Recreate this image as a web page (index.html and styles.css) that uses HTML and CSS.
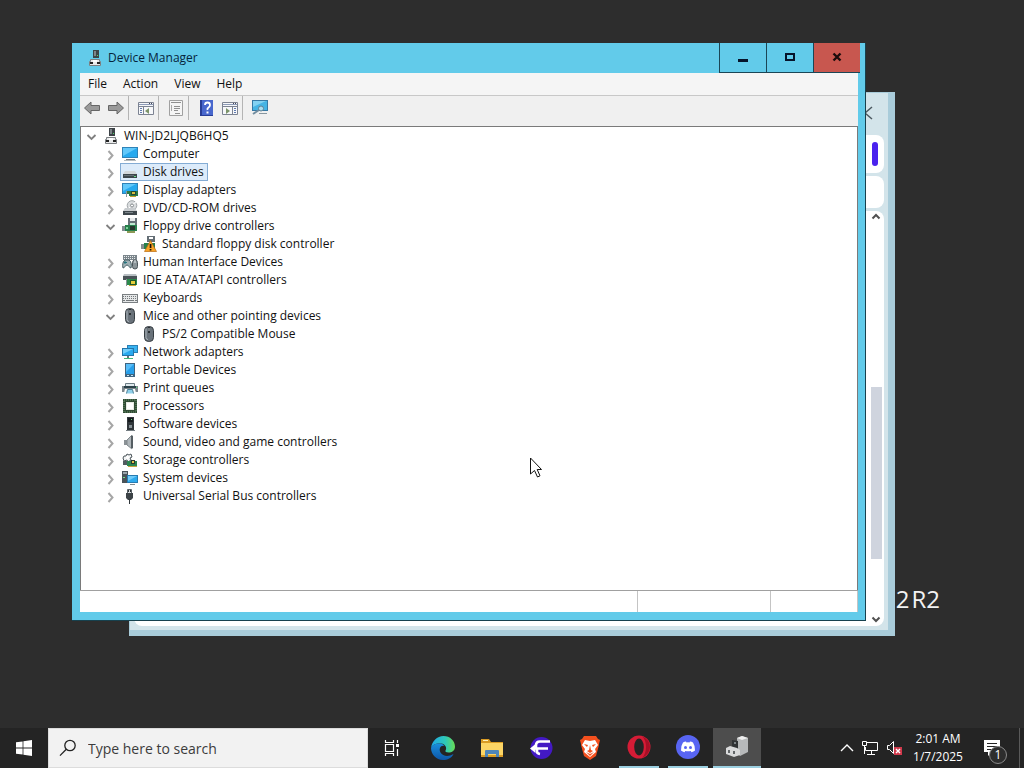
FILE: index.html
```html
<!DOCTYPE html>
<html lang="en">
<head>
    <meta charset="UTF-8">
    <meta name="viewport" content="width=device-width, initial-scale=1.0">
    <title>Device Manager</title>
    <link rel="stylesheet" href="styles.css">
</head>
<body>
    <!-- Icon set -->
    <svg class="sprite" aria-hidden="true">
        <symbol id="i-right" viewBox="0 0 16 16"><path d="M6.500 5l4 4.500-4 4.500" fill="none" stroke="#a6a6a6" stroke-width="2"/></symbol>
        <symbol id="i-down" viewBox="0 0 16 16"><path d="M4.500 7l4 4 4-4" fill="none" stroke="#808080" stroke-width="1.800"/></symbol>
        <symbol id="i-host" viewBox="0 0 16 16">
            <path d="M6 0h6v8H6z" fill="#3d4347"/><path d="M7 1h2v5H7z" fill="#7d8589"/><path d="M10 5h1v1h-1z" fill="#4be06a"/>
            <path d="M3.500 9.500h9v2h1v4h-11v-4h1z" fill="#e8e9ea" stroke="#7b7f82"/><path d="M3 12h3v2H3zM10 12h3v2h-3z" fill="#222"/><path d="M6 10h4v2H6z" fill="#fff"/>
        </symbol>
        <symbol id="i-monitor" viewBox="0 0 16 16">
            <path d="M0 1h16v11H0z" fill="#2f83b8"/><path d="M1 2h14v9H1z" fill="#27a9ee"/><path d="M1 2h14L1 10z" fill="#62c8fa"/><path d="M4 13h9v1H4z" fill="#777e84"/><path d="M2 14h12v1H2z" fill="#b4bbc0"/>
        </symbol>
        <symbol id="i-disk" viewBox="0 0 16 16">
            <path d="M3 7h10l2 3H1z" fill="#d3d7da"/><path d="M1 10h14v4H1z" fill="#3e474c"/><path d="M2 11h10v1H2z" fill="#667178"/><path d="M12 12h2v1h-2z" fill="#6be08a"/>
        </symbol>
        <symbol id="i-display" viewBox="0 0 16 16">
            <path d="M0 1h16v11H0z" fill="#2f83b8"/><path d="M1 2h14v9H1z" fill="#27a9ee"/><path d="M1 2h13L1 9z" fill="#62c8fa"/>
            <path d="M5 9h11v5H7v-2H5z" fill="#2c7a45"/><path d="M9 9h5v4H9z" fill="#244c35"/><path d="M10 10h3v2h-3z" fill="#d8bd3e"/><path d="M8 14h6v1H8z" fill="#c49d28"/><path d="M4 9h1v6H4z" fill="#8d9699"/>
        </symbol>
        <symbol id="i-dvd" viewBox="0 0 16 16">
            <circle cx="10" cy="5.500" r="4.800" fill="#d9dcde" stroke="#a1a6a9"/><path d="M10 5l4-3M10 5l-4 4" stroke="#fff"/><circle cx="10" cy="5.500" r="1.500" fill="#fff" stroke="#84898c"/>
            <path d="M3 8h10l2 3H1z" fill="#c8cccf"/><path d="M1 11h14v4H1z" fill="#3e474c"/><path d="M3 12h8v1H3z" fill="#7b858a"/>
        </symbol>
        <symbol id="i-floppy" viewBox="0 0 16 16">
            <path d="M6 0h9v8H6z" fill="#667077"/><path d="M8 0h5v3H8z" fill="#e8ebed"/><path d="M8 5h5v3H8z" fill="#bfe8d1"/>
            <path d="M3 7h12v6H3z" fill="#26804c"/><path d="M0 8h3v5H0z" fill="#858e92"/><path d="M8 8h5v4H8z" fill="#28372e"/><path d="M5 13h8v2H5z" fill="#8d9a58"/><path d="M4 9h2v2H4z" fill="#7bd39a"/>
        </symbol>
        <symbol id="i-floppy-warn" viewBox="0 0 16 16">
            <path d="M6 0h8v6H6z" fill="#646e75"/><path d="M8 1h4v2H8z" fill="#fff"/><path d="M3 7h11v6H3z" fill="#26804c"/><path d="M0 8h3v5H0z" fill="#858e92"/>
            <path d="M9.500 4.500L15.500 15.500H3.500z" fill="#f8a427" stroke="#b96a10" stroke-width=".7"/><path d="M8.700 8h1.700v4H8.700zM8.700 13h1.700v1.500H8.700z" fill="#201208"/>
        </symbol>
        <symbol id="i-hid" viewBox="0 0 16 16">
            <path d="M1 1h14v5H1z" fill="#7b858b"/><path d="M2 2.500h12M2 4.500h12" stroke="#e7ebec" stroke-dasharray="1 1"/>
            <path d="M1 14c-1-3 0-7 2-8h4c2 1 3 5 2 8-2 0-2-3-4-3s-2 3-4 3z" fill="#9fb1b5" stroke="#4b6167"/><path d="M3 7v3M2 8.500h3" stroke="#25727c"/><rect x="10.500" y="6" width="5" height="9" rx="2.500" fill="#8b9599" stroke="#4c565a"/><path d="M13 6v3" stroke="#e2e7e9"/>
        </symbol>
        <symbol id="i-ide" viewBox="0 0 16 16">
            <path d="M2 2h12l1 2H1z" fill="#b9c0c4"/><path d="M1 4h14v4H1z" fill="#4a5358"/><path d="M5 7h10v6H5z" fill="#2b8a4c"/><path d="M8 8h6v5H8z" fill="#20582a"/><path d="M9 9h4v3H9z" fill="#e5cf3c"/><path d="M7 13h7v1H7z" fill="#cda634"/><path d="M4 7h1v7H4z" fill="#899296"/>
        </symbol>
        <symbol id="i-keyboard" viewBox="0 0 16 16">
            <path d="M0 4h16v9H0z" fill="#7b8083"/><path d="M1 5h14v7H1z" fill="#e5e7e8"/><path d="M1 6.500h14M1 8.500h14" stroke="#74797c" stroke-dasharray="1 1"/><path d="M1 10.500h2M4 10.500h8M13 10.500h2" stroke="#74797c"/>
        </symbol>
        <symbol id="i-mouse" viewBox="0 0 16 16">
            <rect x="3.500" y=".5" width="9" height="15" rx="4" fill="#69727a" stroke="#363d42"/><path d="M5 2.500v9q0 2 2 2" fill="none" stroke="#aeb6bc"/><path d="M8 1v6" stroke="#2b3135" stroke-width="2"/><path d="M8 2v3" stroke="#c4cbd0"/>
        </symbol>
        <symbol id="i-network" viewBox="0 0 16 16">
            <path d="M5 1h11v8H5z" fill="#2b7fb4"/><path d="M6 2h9v6H6z" fill="#38b3f1"/><path d="M0 4h12v8H0z" fill="#2475a9"/><path d="M1 5h10v6H1z" fill="#29aaf0"/><path d="M1 5h10l-10 5z" fill="#71cefb"/><path d="M5 12h2v2H5z" fill="#6a7378"/><path d="M2 14h9v1H2z" fill="#41b77a"/>
        </symbol>
        <symbol id="i-portable" viewBox="0 0 16 16">
            <path d="M3 1h10v14H3z" fill="#3e6480"/><path d="M4 2h8v10H4z" fill="#279fea"/><path d="M4 2h8l-8 8z" fill="#58bdf8"/><path d="M5 13h2v1H5zM9 13h2v1H9z" fill="#c4e5f7"/>
        </symbol>
        <symbol id="i-printer" viewBox="0 0 16 16">
            <path d="M3.500 3.500h9v3h-9z" fill="#dfe9ed" stroke="#6d7d85"/><path d="M0 6h16v6H0z" fill="#7d878c"/><path d="M2 6h12v2H2z" fill="#2b4149"/><path d="M14 7h1v1h-1z" fill="#62e58a"/><path d="M3 9h10l1 4H2z" fill="#fff"/><path d="M4.500 13.500l1-4h5l1 4" fill="#8fd0ea" stroke="#4b7f95"/>
        </symbol>
        <symbol id="i-cpu" viewBox="0 0 16 16">
            <path d="M1 1h14v14H1z" fill="#304b34"/><path d="M2 2h12v12H2z" fill="none" stroke="#6a936d" stroke-dasharray="1 1"/><path d="M4 4h8v8H4z" fill="#e8ece4"/><path d="M5 5h6v6H5z" fill="#fff"/>
        </symbol>
        <symbol id="i-software" viewBox="0 0 16 16">
            <path d="M5 1h7v13H5z" fill="#30363a"/><path d="M6 2h5v4H6z" fill="#151a1d"/><path d="M7 9h3v3H7z" fill="#869095"/><path d="M9 3h1v1H9z" fill="#63d67e"/><path d="M4 14h9v1H4z" fill="#737c81"/>
        </symbol>
        <symbol id="i-sound" viewBox="0 0 16 16">
            <path d="M2 6h3v5H2z" fill="#8b9296"/><path d="M5 6l5-5v14l-5-4z" fill="#b0b7bb" stroke="#81898d"/><path d="M9 2h2v12H9z" fill="#555e63"/>
        </symbol>
        <symbol id="i-storage" viewBox="0 0 16 16">
            <path d="M2 4h2l1-2 2 1 2-1 1 3-2 1 1 2-3 2-1-2-3 1-1-3z" fill="#f0f2f3" stroke="#4d565b"/><circle cx="5.500" cy="5.500" r="1.500" fill="#fff"/>
            <path d="M1 9h7v4H1z" fill="#525c61"/><path d="M5 9h10v5H5z" fill="#2c8550"/><path d="M9 8h4v4H9z" fill="#2b392f"/><path d="M10 9h2v2h-2z" fill="#e1c247"/><path d="M6 14h9v1H6z" fill="#c8a53c"/>
        </symbol>
        <symbol id="i-system" viewBox="0 0 16 16">
            <path d="M0 1h6v12H0z" fill="#495359"/><path d="M1 2h4v2H1z" fill="#9ba6ac"/><path d="M1 7h2v1H1z" fill="#74df87"/><path d="M5 5h11v8H5z" fill="#277bb1"/><path d="M6 6h9v6H6z" fill="#2eabee"/><path d="M6 6h9l-9 5z" fill="#6fcbf9"/><path d="M8 14h5v1H8z" fill="#818a8e"/>
        </symbol>
        <symbol id="i-usb" viewBox="0 0 16 16">
            <path d="M5.500 1.500h4v4h-4z" fill="#d6dadc" stroke="#5c6469"/><path d="M6 2h1v2H6zM8 2h1v2H8z" fill="#30363a"/><path d="M4 5h7v5l-2 2H6l-2-2z" fill="#3c4347"/><path d="M7 11h1v5H7z" fill="#30363a"/>
        </symbol>
    </svg>

    <main class="desktop">
        <div class="watermark"><span>2</span> <span>R2</span></div>

        <!-- Browser window behind -->
        <section class="browser" aria-label="Browser">
            <div class="browser-top">
                <svg viewBox="0 0 12 14" width="12" height="14"><path d="M10 1L3 7l7 6" fill="none" stroke="#4c5960" stroke-width="1.500"/></svg>
            </div>
            <div class="browser-bar"><span class="accent"></span></div>
            <div class="browser-card"></div>
            <div class="browser-page">
                <div class="scrollbar">
                    <svg viewBox="0 0 12 12"><path d="M2.500 7.500L6 4l3.500 3.500" fill="none" stroke="#505050" stroke-width="2"/></svg>
                    <div class="track"><span class="thumb"></span></div>
                    <svg viewBox="0 0 12 12"><path d="M2.500 3.500L6 7l3.500-3.500" fill="none" stroke="#505050" stroke-width="2"/></svg>
                </div>
            </div>
        </section>

        <section class="window" aria-label="Device Manager">
            <header class="titlebar">
                <svg class="icon"><use href="#i-host"/></svg>
                <h1>Device Manager</h1>
                <div class="caption">
                    <button aria-label="Minimize"><svg viewBox="0 0 12 12"><path d="M1 7h10v3H1z" fill="#06142a"/></svg></button>
                    <button aria-label="Maximize"><svg viewBox="0 0 12 12"><path d="M2 2h8v6H2z" fill="none" stroke="#06142a" stroke-width="2"/></svg></button>
                    <button class="close" aria-label="Close"><svg viewBox="0 0 12 12"><path d="M2.500 1.500l7 7M9.500 1.500l-7 7" stroke="#1c0c0c" stroke-width="2.400"/></svg></button>
                </div>
            </header>

            <nav class="menu">
                <button>File</button>
                <button>Action</button>
                <button>View</button>
                <button>Help</button>
            </nav>

            <div class="toolbar">
                <div class="tools">
                    <button aria-label="Back"><svg viewBox="0 0 18 18"><path d="M1.500 9L8 3v3.500h8.500v5H8V15z" fill="#9a9a9a" stroke="#666"/></svg></button>
                    <button aria-label="Forward"><svg viewBox="0 0 18 18"><path d="M16.500 9L10 3v3.500H1.500v5H10V15z" fill="#9a9a9a" stroke="#666"/></svg></button>
                </div>
                <div class="tools">
                    <button aria-label="Show console tree"><svg viewBox="0 0 18 18"><path d="M1.500 3.500h15v12h-15z" fill="#f7f8fa" stroke="#7c8392"/><path d="M2 5.500h14" stroke="#8d9bb8"/><path d="M12 4h1v1h-1zM14 4h1v1h-1z" fill="#445"/><path d="M2 7.500h14M6.500 8v7" stroke="#7c8392"/><path d="M3 9.500h2M3 11.500h2M3 13.500h2" stroke="#607bb1"/><path d="M12 9v6l-4-3z" fill="#7c946a"/></svg></button>
                </div>
                <div class="tools">
                    <button aria-label="Properties"><svg viewBox="0 0 18 18"><path d="M2.500 1.500h13v15h-13z" fill="#f5f5f5" stroke="#a0a0a0"/><path d="M4 3.500h10M7 7.500h6M7 9.500h6M7 11.500h4M8 14.500h5" stroke="#909090"/><path d="M4.500 6v6" stroke="#aaa"/></svg></button>
                </div>
                <div class="tools">
                    <button aria-label="Help"><svg viewBox="0 0 18 18"><path d="M3 1h13v16H3z" fill="#283d96"/><path d="M5 1h11v15H5z" fill="#4867cd"/><path d="M8 6q0-2.500 2.500-2.500T13 6q0 1.500-1.500 2.500T10.500 11" fill="none" stroke="#fff" stroke-width="1.800"/><path d="M9.500 12.500h2v2h-2z" fill="#fff"/></svg></button>
                    <button aria-label="Show action pane"><svg viewBox="0 0 18 18"><path d="M1.500 3.500h15v12h-15z" fill="#f7f8fa" stroke="#7c8392"/><path d="M2 5.500h14" stroke="#8d9bb8"/><path d="M12 4h1v1h-1zM14 4h1v1h-1z" fill="#445"/><path d="M2 7.500h14M11.500 8v7" stroke="#7c8392"/><path d="M13 9.500h2M13 11.500h2M13 13.500h2" stroke="#607bb1"/><path d="M5 9l4 3-4 3z" fill="#7c946a"/></svg></button>
                </div>
                <div class="tools">
                    <button aria-label="Scan for hardware changes"><svg viewBox="0 0 18 18"><path d="M1 1h16v11H1z" fill="#3679a5"/><path d="M2 2h14v9H2z" fill="#45b4e4"/><path d="M2 2h13L2 8z" fill="#83d2f2"/><path d="M2 15l6-4" stroke="#738ea0" stroke-width="2"/><circle cx="10" cy="9.500" r="2.500" fill="#a9def1" stroke="#5f8195"/><path d="M8 14h8v1H8z" fill="#8796a0"/></svg></button>
                </div>
            </div>

            <ul class="tree">
                <li>
                    <div class="row"><button aria-label="Collapse"><svg class="icon"><use href="#i-down"/></svg></button><span class="item"><svg class="icon"><use href="#i-host"/></svg>WIN-JD2LJQB6HQ5</span></div>
                    <ul>
                        <li><div class="row"><button aria-label="Expand"><svg class="icon"><use href="#i-right"/></svg></button><span class="item"><svg class="icon"><use href="#i-monitor"/></svg>Computer</span></div></li>
                        <li><div class="row"><button aria-label="Expand"><svg class="icon"><use href="#i-right"/></svg></button><span class="item selected"><svg class="icon"><use href="#i-disk"/></svg>Disk drives</span></div></li>
                        <li><div class="row"><button aria-label="Expand"><svg class="icon"><use href="#i-right"/></svg></button><span class="item"><svg class="icon"><use href="#i-display"/></svg>Display adapters</span></div></li>
                        <li><div class="row"><button aria-label="Expand"><svg class="icon"><use href="#i-right"/></svg></button><span class="item"><svg class="icon"><use href="#i-dvd"/></svg>DVD/CD-ROM drives</span></div></li>
                        <li>
                            <div class="row"><button aria-label="Collapse"><svg class="icon"><use href="#i-down"/></svg></button><span class="item"><svg class="icon"><use href="#i-floppy"/></svg>Floppy drive controllers</span></div>
                            <ul>
                                <li><div class="row leaf"><span class="item"><svg class="icon"><use href="#i-floppy-warn"/></svg>Standard floppy disk controller</span></div></li>
                            </ul>
                        </li>
                        <li><div class="row"><button aria-label="Expand"><svg class="icon"><use href="#i-right"/></svg></button><span class="item"><svg class="icon"><use href="#i-hid"/></svg>Human Interface Devices</span></div></li>
                        <li><div class="row"><button aria-label="Expand"><svg class="icon"><use href="#i-right"/></svg></button><span class="item"><svg class="icon"><use href="#i-ide"/></svg>IDE ATA/ATAPI controllers</span></div></li>
                        <li><div class="row"><button aria-label="Expand"><svg class="icon"><use href="#i-right"/></svg></button><span class="item"><svg class="icon"><use href="#i-keyboard"/></svg>Keyboards</span></div></li>
                        <li>
                            <div class="row"><button aria-label="Collapse"><svg class="icon"><use href="#i-down"/></svg></button><span class="item"><svg class="icon"><use href="#i-mouse"/></svg>Mice and other pointing devices</span></div>
                            <ul>
                                <li><div class="row leaf"><span class="item"><svg class="icon"><use href="#i-mouse"/></svg>PS/2 Compatible Mouse</span></div></li>
                            </ul>
                        </li>
                        <li><div class="row"><button aria-label="Expand"><svg class="icon"><use href="#i-right"/></svg></button><span class="item"><svg class="icon"><use href="#i-network"/></svg>Network adapters</span></div></li>
                        <li><div class="row"><button aria-label="Expand"><svg class="icon"><use href="#i-right"/></svg></button><span class="item"><svg class="icon"><use href="#i-portable"/></svg>Portable Devices</span></div></li>
                        <li><div class="row"><button aria-label="Expand"><svg class="icon"><use href="#i-right"/></svg></button><span class="item"><svg class="icon"><use href="#i-printer"/></svg>Print queues</span></div></li>
                        <li><div class="row"><button aria-label="Expand"><svg class="icon"><use href="#i-right"/></svg></button><span class="item"><svg class="icon"><use href="#i-cpu"/></svg>Processors</span></div></li>
                        <li><div class="row"><button aria-label="Expand"><svg class="icon"><use href="#i-right"/></svg></button><span class="item"><svg class="icon"><use href="#i-software"/></svg>Software devices</span></div></li>
                        <li><div class="row"><button aria-label="Expand"><svg class="icon"><use href="#i-right"/></svg></button><span class="item"><svg class="icon"><use href="#i-sound"/></svg>Sound, video and game controllers</span></div></li>
                        <li><div class="row"><button aria-label="Expand"><svg class="icon"><use href="#i-right"/></svg></button><span class="item"><svg class="icon"><use href="#i-storage"/></svg>Storage controllers</span></div></li>
                        <li><div class="row"><button aria-label="Expand"><svg class="icon"><use href="#i-right"/></svg></button><span class="item"><svg class="icon"><use href="#i-system"/></svg>System devices</span></div></li>
                        <li><div class="row"><button aria-label="Expand"><svg class="icon"><use href="#i-right"/></svg></button><span class="item"><svg class="icon"><use href="#i-usb"/></svg>Universal Serial Bus controllers</span></div></li>
                    </ul>
                </li>
            </ul>

            <footer class="statusbar"><span></span><span></span><span></span></footer>
        </section>

        <svg class="cursor" viewBox="0 0 14 22"><path d="M1.500 1v16l4-3.500 3 6.500 2.500-1.200L8.200 12.500H12.500z" fill="#fff" stroke="#111"/></svg>
    </main>

    <footer class="taskbar">
        <button class="start" aria-label="Start"><svg viewBox="0 0 16 16" width="16" height="16"><path d="M0 2.300L6.600 1.400v6.200H0zM7.400 1.300L16 0v7.600H7.400zM0 8.400h6.600v6.200L0 13.700zM7.400 8.400H16V16l-8.600-1.300z" fill="#fff"/></svg></button>
        <label class="search">
            <svg viewBox="0 0 18 18" width="18" height="18"><circle cx="11" cy="6.500" r="5.200" fill="none" stroke="#222" stroke-width="1.300"/><path d="M7.300 10.300L1 16.600" stroke="#222" stroke-width="1.300"/></svg>
            <input type="text" placeholder="Type here to search" aria-label="Search">
        </label>
        <button class="app" aria-label="Task view"><svg viewBox="0 0 18 18" width="18" height="18"><path d="M2.500 5.500h8v7h-8zM2.500 1v2.500h8V1M2.500 17v-2.500h8V17M14.500 1v3M14.500 10v7" fill="none" stroke="#fff" stroke-width="1.200"/><path d="M13 5h3v3h-3z" fill="#fff"/></svg></button>
        <button class="app edge" aria-label="Edge"><svg viewBox="0 0 24 24" width="24" height="24">
            <defs>
                <linearGradient id="edge-a" x1="0" y1="0" x2="1" y2="0"><stop offset="0" stop-color="#1fa8e8"/><stop offset=".6" stop-color="#2ec8b8"/><stop offset="1" stop-color="#68dd55"/></linearGradient>
                <linearGradient id="edge-b" x1="0" y1="0" x2="0" y2="1"><stop offset="0" stop-color="#1a8fdc"/><stop offset="1" stop-color="#0d56a8"/></linearGradient>
            </defs>
            <path d="M0 12C1 5 6 0 12.500 0 19 0 24 5 24 10.500c0 4-3 6-6.500 6-2.500 0-3.500-1-3-2 1.500-2 .5-6.500-4.500-7C5 7 1 9 0 12z" fill="url(#edge-a)"/>
            <path d="M0 12c1-3 5-5 9-4.500 2 .2 3.500 1.200 4.500 2.500-4-1-6 3-4 6.500 2.500 4 8 4.500 13 1.500-2 4-6 6-10.500 6C5 24 0 18 0 12z" fill="url(#edge-b)"/>
        </svg></button>
        <button class="app" aria-label="File Explorer"><svg viewBox="0 0 24 24" width="24" height="24"><path d="M1 3h8l2 3h12v15H1z" fill="#d99b24"/><path d="M1 7h22v12H1z" fill="#fcd565"/><path d="M3 4h5v1H3z" fill="#fff2bb"/><path d="M5 21v-6q0-1 1-1h12q1 0 1 1v6h-3v-3H8v3z" fill="#4f86b9"/></svg></button>
        <button class="app" aria-label="Browser"><svg viewBox="0 0 24 24" width="24" height="24"><circle cx="12.500" cy="12" r="11" fill="#4319c4"/><path d="M21 5.500H11Q7 5.500 7 9.500V12M5 12.500h14M8 13v2.500q0 2 3 2.500" fill="none" stroke="#fff" stroke-width="2.600"/><path d="M1 12.500L6.500 8v9z" fill="#fff"/></svg></button>
        <button class="app" aria-label="Brave"><svg viewBox="0 0 24 24" width="24" height="24"><path d="M6 0h12l2 3 2 1-1 4 0 1-3 11-6 4-6-4L3 9V8L2 4l2-1z" fill="#f4501e"/><path d="M7 4l5 1 5-1 3 5-3 4 1 3-6 5-6-5 1-3-3-4z" fill="#fff"/><path d="M6 8l4 1-1 2zM18 8l-4 1 1 2zM12 9l1 5 2 1-3 2-3-2 2-1zM8 16l4 2 4-2-4 4z" fill="#f4501e"/></svg></button>
        <button class="app running" aria-label="Opera"><svg viewBox="0 0 24 24" width="24" height="24"><circle cx="12" cy="12" r="11.500" fill="#d51c36"/><path d="M15 1q8 4 8 11t-8 11q4-4 4-11T15 1z" fill="#a70f26"/><ellipse cx="12" cy="12" rx="4.800" ry="8.500" fill="#242424"/></svg></button>
        <button class="app running" aria-label="Discord"><svg viewBox="0 0 24 24" width="24" height="24"><circle cx="12" cy="12" r="12" fill="#5865f2"/><path d="M7 7.500Q8.500 6.600 10 6.500l.5 1q1.500-.3 3 0l.5-1q1.500.1 3 1Q19.300 11 19 15.500q-1.500 1.300-3.500 1.700l-.8-1.300q-2.700.8-5.400 0l-.8 1.300Q6.500 16.800 5 15.500 4.700 11 7 7.500z" fill="#fff"/><circle cx="9.500" cy="12.500" r="1.500" fill="#5865f2"/><circle cx="14.500" cy="12.500" r="1.500" fill="#5865f2"/></svg></button>
        <button class="app running active" aria-label="Device Manager"><svg viewBox="0 0 24 24" width="24" height="24"><path d="M12 3l5-2 6 2v14l-8 4-3-3z" fill="#b7b9ba"/><path d="M12 3l5-2 6 2-6 2z" fill="#eee"/><path d="M7 5l6 1v8l-6-1z" fill="#303335"/><path d="M9 7h2v2H9z" fill="#7c8386"/><path d="M1 13l4-2 7 2 3 2v5l-6 2-8-3z" fill="#d9dadb"/><path d="M3 15h2v3H3zM8 16h2v3H8z" fill="#626668"/></svg></button>

        <div class="tray">
            <button class="tray-icon" aria-label="Show hidden icons"><svg viewBox="0 0 14 14" width="14" height="14"><path d="M1 10l6-6 6 6" fill="none" stroke="#fff" stroke-width="1.400"/></svg></button>
            <button class="tray-icon" aria-label="Network"><svg viewBox="0 0 18 16" width="18" height="16"><path d="M6 2.500h10.500v8H4.500V7M10.500 11v3M6 14.500h8" fill="none" stroke="#fff"/><path d="M1.500 1.500h4v4h-4zM3.500 6v8" fill="none" stroke="#fff"/></svg></button>
            <button class="tray-icon" aria-label="Volume muted"><svg viewBox="0 0 18 16" width="18" height="16"><path d="M1.500 5.500h2l4-4v12l-4-4h-2z" fill="none" stroke="#fff"/><path d="M8 7h8v8H8z" fill="#d0394b"/><path d="M10 9l4 4M14 9l-4 4" stroke="#fff" stroke-width="1.400"/></svg></button>
        </div>
        <div class="clock"><span>2:01 AM</span><span>1/7/2025</span></div>
        <button class="notify" aria-label="Notifications"><svg viewBox="0 0 18 18" width="18" height="18"><path d="M1 1h16v12H9l-4 4v-4H1z" fill="#fff"/><path d="M4 4.500h10M4 7.500h10M4 10.500h6" stroke="#252525"/></svg><span class="badge">1</span></button>
        <span class="peek"></span>
    </footer>
</body>
</html>
```
FILE: styles.css
```css
* {
    margin: 0;
    padding: 0;
    box-sizing: border-box;
}

:root {
    --desktop: #2d2d2d;
    --frame: #62cbea;
    --chrome: #f0f0f0;
}

body {
    font-family: 'Open Sans', 'Noto Sans', sans-serif;
    font-size: 12px;
    color: #111;
    background: var(--desktop);
    display: flex;
    flex-direction: column;
    height: 100vh;
    overflow: hidden;
}

button {
    font: inherit;
    color: inherit;
    background: none;
    border: none;
}

svg {
    display: block;
}

ul {
    list-style: none;
}

.sprite {
    position: absolute;
    width: 0;
    height: 0;
}

.icon {
    width: 16px;
    height: 16px;
    flex: none;
}

.desktop {
    position: relative;
    flex: 1;
}

.watermark {
    position: absolute;
    right: 84px;
    bottom: 113px;
    display: flex;
    gap: 2px;
    font-size: 24px;
    line-height: 32px;
    color: #f2f2f2;
}

/* Browser window */
.browser {
    position: absolute;
    top: 92px;
    right: 129px;
    bottom: 92px;
    left: 129px;
    display: flex;
    flex-direction: column;
    gap: 3px;
    padding: 0 4px 4px;
    background: #d3e4ea;
    border: solid #a9ccda;
    border-width: 1px 7px 6px 1px;
}

.browser-top {
    display: flex;
    align-items: center;
    justify-content: flex-end;
    height: 39px;
    padding-right: 10px;
}

.browser-bar {
    display: flex;
    justify-content: flex-end;
    height: 38px;
    padding: 7px 6px;
    background: #fff;
    border-radius: 8px;
}

.accent {
    width: 6px;
    border-radius: 3px;
    background: #4a22ee;
}

.browser-card {
    height: 32px;
    background: #fff;
    border-radius: 8px;
}

.browser-page {
    flex: 1;
    display: flex;
    justify-content: flex-end;
    background: #fff;
    border-radius: 8px;
}

.scrollbar {
    width: 16px;
    display: flex;
    flex-direction: column;
    align-items: center;
}

.scrollbar svg {
    width: 12px;
    height: 12px;
}

.track {
    flex: 1;
    display: flex;
    flex-direction: column;
}

.track::before {
    content: "";
    flex: 42;
}

.track::after {
    content: "";
    flex: 14;
}

.thumb {
    flex: 44;
    width: 11px;
    background: #cfd4de;
}

/* Device Manager window */
.window {
    position: absolute;
    top: 43px;
    right: 158px;
    bottom: 107px;
    left: 72px;
    display: flex;
    flex-direction: column;
    padding: 0 7px 8px 8px;
    background: var(--frame);
    border: solid #17414e;
    border-width: 0 1px 1px 0;
}

.titlebar {
    display: flex;
    align-items: center;
    height: 30px;
    margin-right: -2px;
    padding-left: 7px;
}

.titlebar h1 {
    flex: 1;
    margin-left: 5px;
    padding-bottom: 2px;
    font-size: 12px;
    font-weight: normal;
    color: #06243c;
}

.caption {
    display: flex;
    align-self: stretch;
}

.caption button {
    display: flex;
    align-items: center;
    justify-content: center;
    width: 47px;
    border: solid #1b4656;
    border-width: 0 0 1px 1px;
}

.caption svg {
    width: 12px;
    height: 12px;
}

.caption .close {
    background: #c8574f;
}

.menu {
    display: flex;
    height: 23px;
    background: #f5f5f5;
    border-bottom: 1px solid #c8c8c8;
}

.menu button {
    padding: 0 8px 2px;
}

.toolbar {
    display: flex;
    align-items: center;
    height: 30px;
    padding-bottom: 6px;
    background: var(--chrome);
}

.tools {
    display: flex;
    gap: 6px;
    height: 24px;
    padding: 0 3px 0 8px;
    border-right: 1px solid #b4b4b4;
}

.tools:first-child {
    padding-left: 3px;
}

.tools:last-child {
    border: none;
}

.tools button {
    display: flex;
    align-items: center;
}

.tools svg {
    width: 18px;
    height: 18px;
}

.tree {
    flex: 1;
    padding-left: 2px;
    background: #fff;
    border: solid #7a7a7a;
    border-width: 1px 1px 0 1px;
    overflow: hidden;
}

.tree ul {
    padding-left: 19px;
}

.row {
    display: flex;
    align-items: center;
    height: 18px;
}

.row.leaf {
    padding-left: 16px;
}

.item {
    display: flex;
    align-items: center;
    gap: 5px;
    height: 18px;
    margin-left: 2px;
    padding: 0 3px 0 1px;
    line-height: 16px;
    border: 1px solid transparent;
}

.item.selected {
    background: #dcebfa;
    border-color: #84acd4;
}

.statusbar {
    display: flex;
    height: 22px;
    background: #fff;
    border-top: 1px solid #a0a0a0;
}

.statusbar span {
    width: 87px;
    border-right: 1px solid #c4c4c4;
}

.statusbar span:first-child {
    flex: 1;
}

.statusbar span:nth-child(2) {
    width: 133px;
}

.cursor {
    position: absolute;
    left: 529px;
    top: 457px;
    width: 14px;
    height: 22px;
}

/* Taskbar */
.taskbar {
    display: flex;
    height: 40px;
    background: #242424;
    color: #fff;
}

.start {
    display: flex;
    align-items: center;
    justify-content: center;
    width: 48px;
}

.search {
    display: flex;
    align-items: center;
    gap: 11px;
    width: 320px;
    padding: 0 10px;
    background: #f2f2f2;
    border: 1px solid #dcdcdc;
}

.search input {
    flex: 1;
    min-width: 0;
    font: inherit;
    font-size: 14px;
    color: #333;
    background: none;
    border: none;
    outline: none;
}

.search input::placeholder {
    color: #3c3c3c;
}

.app {
    display: flex;
    align-items: center;
    justify-content: center;
    width: 48px;
    margin-right: 1px;
}

.app.edge {
    margin-left: 2px;
}

.app.running {
    margin: 0 5px 0 4px;
    width: 40px;
    border-bottom: 2px solid #9bcfe0;
}

.app.running.active {
    width: 48px;
    margin: 0;
    background: #4d4d4d;
}

.tray {
    display: flex;
    align-items: center;
    gap: 7px;
    margin-left: auto;
    margin-right: 7px;
}

.clock {
    display: flex;
    flex-direction: column;
    align-items: center;
    justify-content: center;
    width: 54px;
    line-height: 18px;
}

.notify {
    position: relative;
    display: flex;
    align-items: center;
    justify-content: center;
    width: 54px;
}

.badge {
    position: absolute;
    right: 12px;
    bottom: 4px;
    width: 18px;
    height: 18px;
    font-size: 12px;
    line-height: 16px;
    background: #2d2d2d;
    border: 1px solid #8a8a8a;
    border-radius: 50%;
}

.peek {
    width: 5px;
    border-left: 1px solid #5a5a5a;
}
```
